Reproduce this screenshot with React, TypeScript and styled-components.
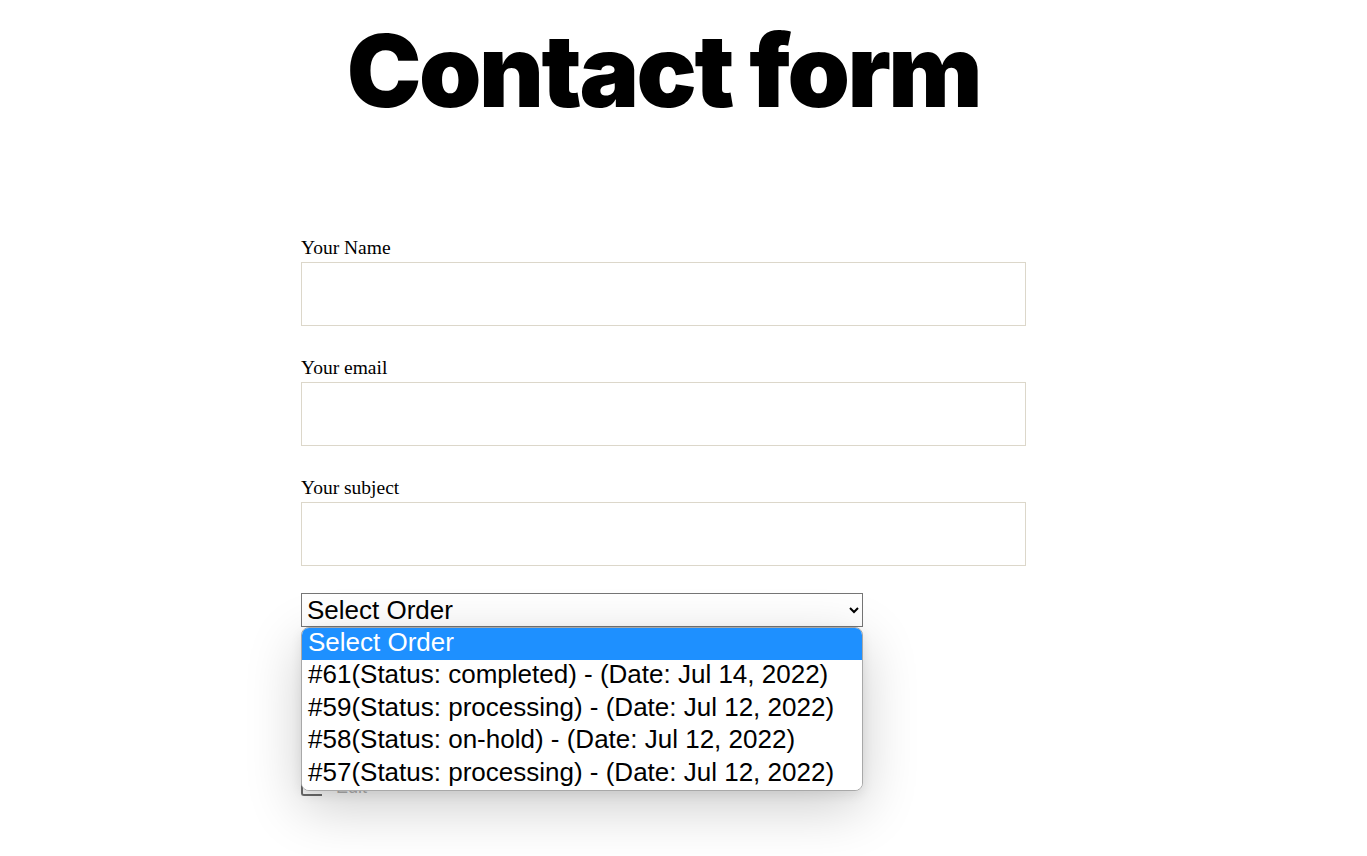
import React from "react";
import styled, { createGlobalStyle } from "styled-components";

const GlobalStyle = createGlobalStyle`
  html, body { margin: 0; padding: 0; background: #ffffff; }
  body { font-family: "Liberation Serif", serif; color: #000; }
`;

const Page = styled.main`
  box-sizing: border-box;
  width: 1026px;
  min-height: 856px;
  padding: 11px 0 0 301px;
`;

const Title = styled.h1`
  margin: 0;
  font-family: Inter, "Liberation Sans", sans-serif;
  font-weight: 900;
  font-size: 100px;
  line-height: 1.2;
  letter-spacing: -0.025em;
  text-align: center;
`;

const Form = styled.form`
  display: flex;
  flex-direction: column;
  gap: 30px;
  margin-top: 105px;
`;

const Field = styled.div`
  display: flex;
  flex-direction: column;
  gap: 3px;
`;

const Label = styled.label`
  font-family: "Liberation Serif", serif;
  font-size: 19.5px;
  line-height: 23px;
`;

const TextInput = styled.input`
  box-sizing: border-box;
  width: 725px;
  height: 64px;
  border: 1px solid #dcd7ca;
  background: #fff;
  margin: 0;
`;

const SelectWrap = styled.div`
  position: relative;
  width: 562px;
  margin-top: -3px;
`;

const OrderSelect = styled.select`
  box-sizing: border-box;
  width: 562px;
  height: 34px;
  margin: 0;
  padding: 0 1px;
  border: 1px solid #767676;
  border-radius: 0;
  background: #fff;
  color: #000;
  font-family: "Liberation Sans", Arial, sans-serif;
  font-size: 26px;
`;

const Popup = styled.ul`
  position: absolute;
  top: 34px;
  left: 0;
  z-index: 10;
  box-sizing: border-box;
  width: 562px;
  margin: 0;
  padding: 0;
  list-style: none;
  background: #fff;
  border: 1px solid #a8a8a8;
  border-radius: 8px;
  overflow: hidden;
  box-shadow: 0 16px 56px rgba(0, 0, 0, 0.2), 0 4px 12px rgba(0, 0, 0, 0.08);
`;

const Option = styled.li<{ $active?: boolean }>`
  box-sizing: border-box;
  height: 32.4px;
  line-height: 28px;
  padding: 0 6px 4px;
  font-family: "Liberation Sans", Arial, sans-serif;
  font-size: 26px;
  white-space: nowrap;
  background: ${(p) => (p.$active ? "#1e90ff" : "#fff")};
  color: ${(p) => (p.$active ? "#fff" : "#000")};
`;

const Hidden = styled.div`
  display: flex;
  flex-direction: column;
  padding-top: 31px;
`;

const MessageBox = styled.div`
  box-sizing: border-box;
  width: 420px;
  height: 73px;
  border: 1px solid #dcd7ca;
  border-left: 1px solid #8e4a5e;
`;

const CheckRow = styled.div`
  display: flex;
  align-items: flex-end;
  gap: 14px;
  height: 64px;
  margin-top: 1px;
`;

const CheckBox = styled.span`
  box-sizing: border-box;
  width: 21px;
  height: 62px;
  border: 2px solid #6d6d6d;
  border-top: none;
  border-right: none;
  border-radius: 0 0 0 3px;
`;

const CheckText = styled.span`
  font-family: "Liberation Sans", Arial, sans-serif;
  font-size: 18px;
  line-height: 18px;
  color: #b5b5b5;
`;

const options = [
  "#61(Status: completed) - (Date: Jul 14, 2022)",
  "#59(Status: processing) - (Date: Jul 12, 2022)",
  "#58(Status: on-hold) - (Date: Jul 12, 2022)",
  "#57(Status: processing) - (Date: Jul 12, 2022)",
];

export default function App() {
  return (
    <>
      <GlobalStyle />
      <Page>
        <Title>Contact form</Title>
        <Form onSubmit={(e) => e.preventDefault()}>
          <Field>
            <Label htmlFor="name">Your Name</Label>
            <TextInput id="name" type="text" />
          </Field>
          <Field>
            <Label htmlFor="email">Your email</Label>
            <TextInput id="email" type="email" />
          </Field>
          <Field>
            <Label htmlFor="subject">Your subject</Label>
            <TextInput id="subject" type="text" />
          </Field>
          <SelectWrap>
            <OrderSelect defaultValue="">
              <option value="">Select Order</option>
              {options.map((o) => (
                <option key={o} value={o}>
                  {o}
                </option>
              ))}
            </OrderSelect>
            <Popup>
              <Option $active>Select Order</Option>
              {options.map((o) => (
                <Option key={o}>{o}</Option>
              ))}
            </Popup>
            <Hidden>
              <MessageBox />
              <CheckRow>
                <CheckBox />
                <CheckText>Edit</CheckText>
              </CheckRow>
            </Hidden>
          </SelectWrap>
        </Form>
      </Page>
    </>
  );
}
